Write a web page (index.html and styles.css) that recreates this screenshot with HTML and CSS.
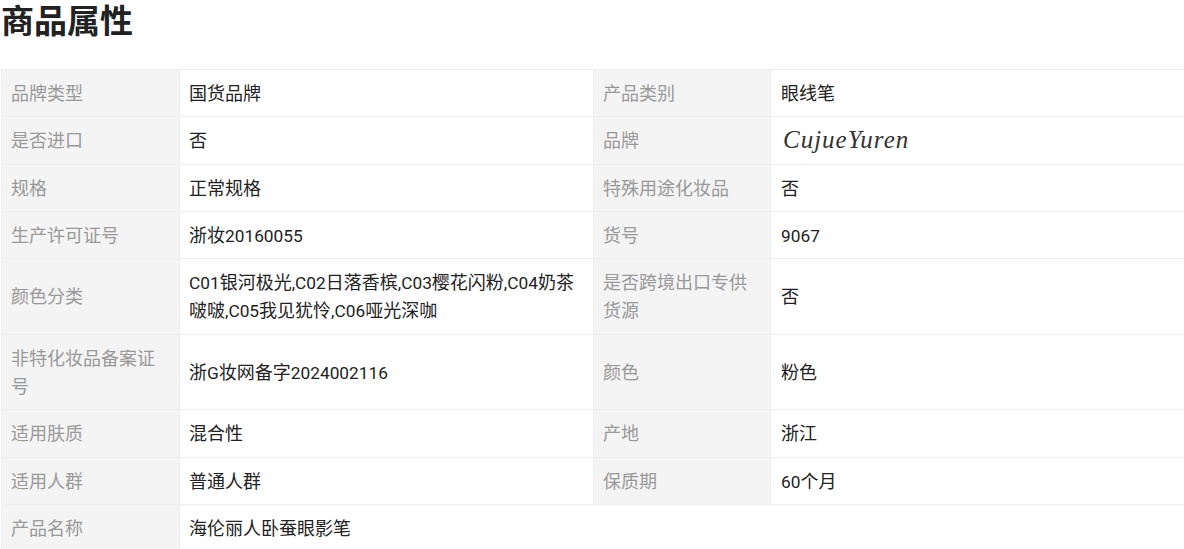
FILE: index.html
```html
<!DOCTYPE html>
<html lang="zh-CN">
<head>
<meta charset="utf-8">
<title>商品属性</title>
<link rel="stylesheet" href="styles.css">
</head>
<body>
<h1 class="title">商品属性</h1>
<table class="attrs">
<colgroup><col class="c-k1"><col class="c-v1"><col class="c-k2"><col class="c-v2"></colgroup>
<tbody>
<tr><th>品牌类型</th><td>国货品牌</td><th>产品类别</th><td>眼线笔</td></tr>
<tr><th>是否进口</th><td>否</td><th>品牌</th><td><span class="brand">CujueYuren</span></td></tr>
<tr><th>规格</th><td>正常规格</td><th>特殊用途化妆品</th><td>否</td></tr>
<tr><th>生产许可证号</th><td>浙妆<span class="lat">20160055</span></td><th>货号</th><td><span class="lat">9067</span></td></tr>
<tr><th>颜色分类</th><td><span class="lat">C01</span>银河极光<span class="lat">,C02</span>日落香槟<span class="lat">,C03</span>樱花闪粉<span class="lat">,C04</span>奶茶啵啵<span class="lat">,C05</span>我见犹怜<span class="lat">,C06</span>哑光深咖</td><th>是否跨境出口专供货源</th><td>否</td></tr>
<tr><th>非特化妆品备案证号</th><td>浙<span class="lat">G</span>妆网备字<span class="lat">2024002116</span></td><th>颜色</th><td>粉色</td></tr>
<tr><th>适用肤质</th><td>混合性</td><th>产地</th><td>浙江</td></tr>
<tr><th>适用人群</th><td>普通人群</td><th>保质期</th><td><span class="lat">60</span>个月</td></tr>
<tr><th>产品名称</th><td colspan="3">海伦丽人卧蚕眼影笔</td></tr>
</tbody>
</table>
</body>
</html>
```
FILE: styles.css
```css
html, body { margin: 0; padding: 0; background: #fff; overflow: hidden; }
body {
  height: 549px;
  font-family: "Noto Sans CJK SC", "Noto Sans", sans-serif;
  color: #222;
}
.title {
  margin: 0 0 0 1px;
  height: 69px;
  font-size: 33px;
  line-height: 38px;
  font-weight: 700;
  color: #222;
}
.attrs {
  margin-left: 1px;
  width: 1183px;
  table-layout: fixed;
  border-collapse: collapse;
  font-size: 18px;
  line-height: 28.16px;
}
.c-k1 { width: 178px; }
.c-v1 { width: 414px; }
.c-k2 { width: 177px; }
.c-v2 { width: 414px; }
.attrs th, .attrs td {
  border: 1px solid #eee;
  padding: 7.9px 10px 10.3px 9px;
  text-align: left;
  font-weight: 400;
  vertical-align: middle;
}
.attrs td:nth-child(4) { padding-left: 10px; }
.attrs th { background: #f4f4f4; color: #999; }
.attrs td { color: #222; }
.lat {
  font-family: Roboto, sans-serif;
  font-size: 17.3px;
  line-height: 1;
}
.brand {
  font-family: "Liberation Serif", serif;
  font-style: italic;
  font-size: 25px;
  letter-spacing: 1px;
  line-height: 1;
  margin-left: 2px;
  vertical-align: -1px;
  color: #333;
}
```
